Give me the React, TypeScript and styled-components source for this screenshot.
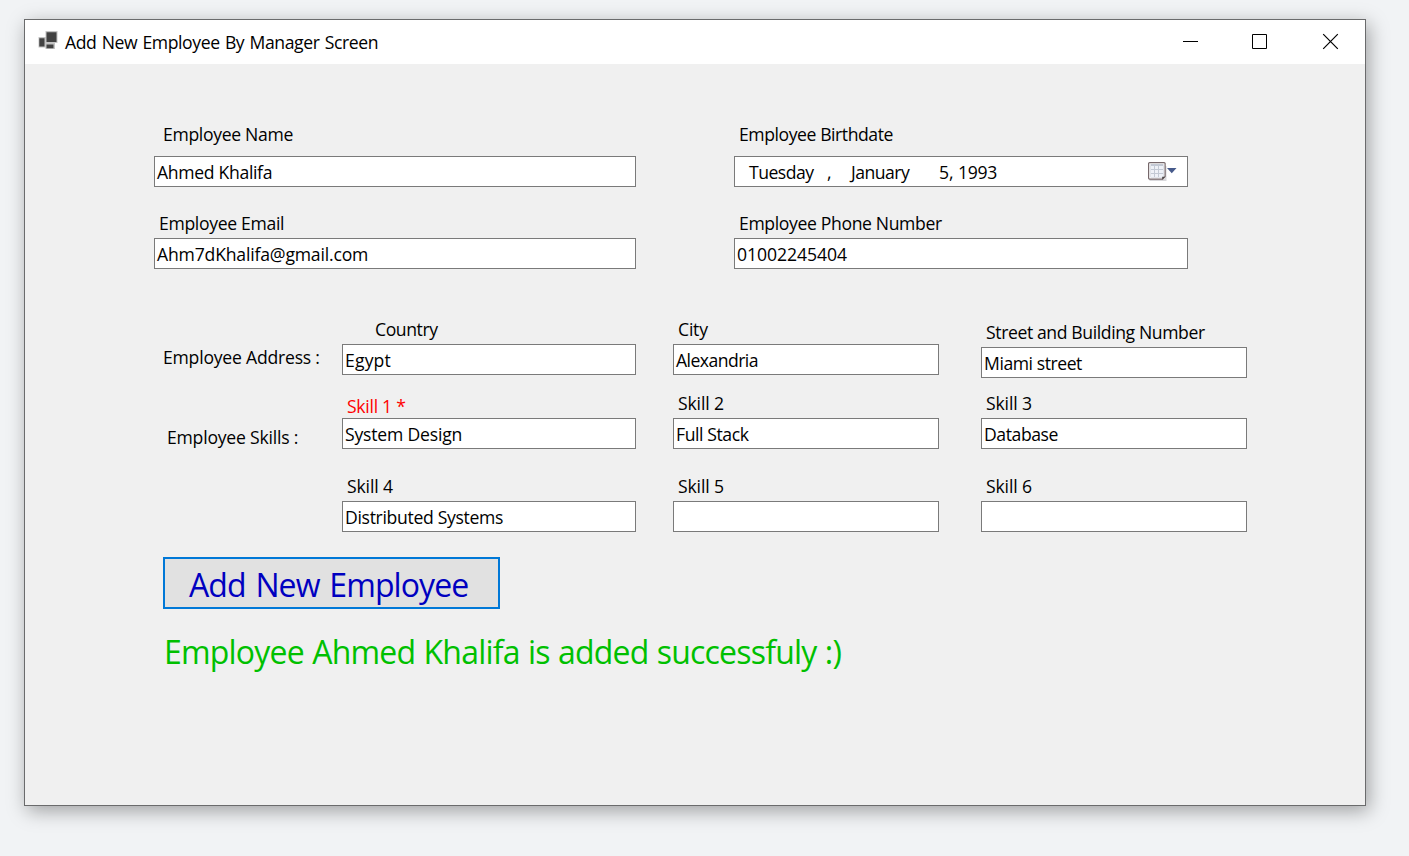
import React from "react";
import styled, { createGlobalStyle } from "styled-components";

const GlobalStyle = createGlobalStyle`
  *, *::before, *::after { box-sizing: border-box; }
  body {
    margin: 0;
    background: #f1f3f5;
    font-family: "Segoe UI", "Open Sans", "Noto Sans", sans-serif;
    font-size: 17.6px;
    line-height: 24px;
    color: #000;
  }
`;

const Desktop = styled.div`
  height: 856px;
  padding: 19px 43px 50px 24px;
  overflow: hidden;
`;

const Window = styled.main`
  display: flex;
  flex-direction: column;
  height: 787px;
  background: #f0f0f0;
  border: 1px solid #6a6b6c;
  box-shadow: 3px 5px 18px rgba(0, 0, 0, 0.34);
`;

const TitleBar = styled.header`
  display: flex;
  flex: none;
  height: 44px;
  padding-left: 13px;
  background: #fff;
`;

const AppIcon = styled.svg`
  width: 20px;
  height: 19px;
  margin: 11px 7px 0 0;
`;

const Title = styled.h1`
  flex: 1;
  margin: 10px 0 0;
  font: inherit;
  letter-spacing: -0.41px;
  word-spacing: 1.1px;
  white-space: nowrap;
`;

const WindowButtons = styled.div`
  display: flex;
`;

const WindowButton = styled.span<{ $width: number }>`
  display: flex;
  justify-content: center;
  width: ${(p) => p.$width}px;
  padding-top: 13px;

  svg {
    width: 17px;
    height: 17px;
    fill: none;
    stroke: #000;
  }
`;

const Form = styled.form`
  display: flex;
  flex-direction: column;
  padding: 58px 0 0 129px;
`;

const PairRow = styled.div`
  display: grid;
  grid-template-columns: 482px 454px;
  column-gap: 98px;
  margin-bottom: 24px;
`;

const GroupRow = styled.div<{ $before?: number }>`
  display: grid;
  grid-template-columns: 188px 294px 266px 266px;
  align-items: start;
  margin-top: ${(p) => p.$before ?? 0}px;

  & > :nth-child(3) { margin-left: 37px; width: 266px; }
  & > :nth-child(4) { margin-left: 79px; width: 266px; }
`;

const GroupTitle = styled.span<{ $top: number; $indent: number; $track: number }>`
  padding: ${(p) => p.$top}px 0 0 ${(p) => p.$indent}px;
  letter-spacing: ${(p) => p.$track}px;
  white-space: nowrap;
`;

const FieldBox = styled.div<{ $drop: number }>`
  display: flex;
  flex-direction: column;
  padding-top: ${(p) => p.$drop}px;
`;

const Label = styled.label<{ $indent: number; $gap: number; $track: number; $required?: boolean }>`
  padding-left: ${(p) => p.$indent}px;
  margin-bottom: ${(p) => p.$gap}px;
  letter-spacing: ${(p) => p.$track}px;
  color: ${(p) => (p.$required ? "#ff0000" : "#000")};
  white-space: nowrap;
`;

const TextBox = styled.div<{ $track?: number; $indent?: number }>`
  display: flex;
  height: 31px;
  padding: 3px 0 0 ${(p) => p.$indent ?? 2}px;
  background: #fff;
  border: 1px solid #7a7a7a;
  letter-spacing: ${(p) => p.$track ?? 0}px;
  white-space: nowrap;
`;

const DatePart = styled.span<{ $width: number; $track: number }>`
  flex: none;
  width: ${(p) => p.$width}px;
  letter-spacing: ${(p) => p.$track}px;
`;

const CalendarIcon = styled.svg`
  width: 30px;
  height: 21px;
  margin: 1px 10px 0 auto;
`;

const SubmitButton = styled.button`
  display: flex;
  width: 337px;
  height: 52px;
  margin-top: 25px;
  margin-left: 9px;
  padding: 4px 0 0 24px;
  background: #e1e1e1;
  border: 2px solid #0078d7;
  border-radius: 0;
  font: inherit;
  font-size: 32px;
  line-height: 44px;
  letter-spacing: -0.92px;
  word-spacing: 2.4px;
  text-align: left;
  white-space: nowrap;
  color: #0000c0;
`;

const Message = styled.p`
  margin: 20px 0 0 10px;
  font-size: 32px;
  line-height: 45px;
  letter-spacing: -0.8px;
  word-spacing: 0.8px;
  color: #00c000;
  white-space: nowrap;
`;

interface FieldProps {
  label: string;
  track: number;
  indent?: number;
  gap?: number;
  drop?: number;
  required?: boolean;
  value?: string;
  valueTrack?: number;
  children?: React.ReactNode;
}

function Field({ label, track, indent = 5, gap = 3, drop = 0, required, value, valueTrack, children }: FieldProps) {
  return (
    <FieldBox $drop={drop}>
      <Label $indent={indent} $gap={gap} $track={track} $required={required}>{label}</Label>
      {children ?? <TextBox $track={valueTrack}>{value}</TextBox>}
    </FieldBox>
  );
}

export default function App() {
  return (
    <>
      <GlobalStyle />
      <Desktop>
        <Window>
          <TitleBar>
            <AppIcon viewBox="0 0 20 19">
              <g fill="#c4c4c4">
                <path d="M.5 6h7v10.500h-7zM7.500 12h9.500v6h-9.500zM7.500 0h12v12h-12z" />
              </g>
              <g fill="#424242">
                <path d="M1.300 7.200h5.200v8.300h-5.200zM8.500 13.500h7v3.700h-7zM8.500 1.200h10v9.800h-10z" />
              </g>
            </AppIcon>
            <Title>Add New Employee By Manager Screen</Title>
            <WindowButtons>
              <WindowButton $width={65}>
                <svg viewBox="0 0 17 17"><path d="M1 8.500h15" /></svg>
              </WindowButton>
              <WindowButton $width={73}>
                <svg viewBox="0 0 17 17"><path d="M1.500 1.500h14v14h-14z" /></svg>
              </WindowButton>
              <WindowButton $width={69}>
                <svg viewBox="0 0 17 17"><path d="M1.200 1.200l14.600 14.600M15.800 1.200L1.200 15.800" strokeWidth="1.200" /></svg>
              </WindowButton>
            </WindowButtons>
          </TitleBar>
          <Form>
            <PairRow>
              <Field label="Employee Name" track={-0.32} indent={9} gap={10} value="Ahmed Khalifa" valueTrack={-0.32} />
              <Field label="Employee Birthdate" track={-0.43} gap={10}>
                <TextBox $indent={14}>
                  <DatePart $width={78} $track={-0.52}>Tuesday</DatePart>
                  <DatePart $width={24} $track={0}>,</DatePart>
                  <DatePart $width={88} $track={-0.5}>January</DatePart>
                  <DatePart $width={19} $track={-0.1}>5,</DatePart>
                  <DatePart $width={44} $track={-0.3}>1993</DatePart>
                  <CalendarIcon viewBox="0 0 30 21">
                    <path d="M2.500 19h16v-14" fill="none" stroke="#d9d9dc" strokeWidth="2" />
                    <path d="M2.600 1.600h14.500a1 1 0 0 1 1 1v13l-2.500 2.500h-13a1 1 0 0 1-1-1v-14.500a1 1 0 0 1 1-1z" fill="#fff" stroke="#75676a" strokeWidth="1.200" />
                    <path d="M3.500 3h13v13.500h-13z" fill="#c3c9d4" />
                    <path d="M4 5h3v3h-3zM8 5h3v3h-3zM12 5h4v3h-4zM4 9h3v3h-3zM8 9h3v3h-3zM12 9h4v3h-4zM4 13h3v3h-3zM8 13h3v3h-3zM12 13h4v3h-4z" fill="#eef1f7" />
                    <path d="M15.200 18.500v-2.800h3z" fill="#4b4444" />
                    <path d="M20 7h9.500l-4.750 5.200z" fill="#465a8b" />
                  </CalendarIcon>
                </TextBox>
              </Field>
            </PairRow>
            <PairRow>
              <Field label="Employee Email" track={-0.33} value="Ahm7dKhalifa@gmail.com" valueTrack={-0.18} />
              <Field label="Employee Phone Number" track={-0.36} value="01002245404" valueTrack={-0.07} />
            </PairRow>
            <GroupRow $before={24}>
              <GroupTitle $top={28} $indent={9} $track={-0.22}>Employee Address :</GroupTitle>
              <Field label="Country" track={-0.42} indent={33} value="Egypt" valueTrack={0.15} />
              <Field label="City" track={-0.2} value="Alexandria" valueTrack={-0.55} />
              <Field label="Street and Building Number" track={-0.39} drop={3} value="Miami street" valueTrack={-0.44} />
            </GroupRow>
            <GroupRow $before={13}>
              <GroupTitle $top={34} $indent={13} $track={-0.22}>Employee Skills :</GroupTitle>
              <Field label="Skill 1 *" track={-0.28} drop={3} gap={0} required value="System Design" valueTrack={-0.2} />
              <Field label="Skill 2" track={-0.15} value="Full Stack" valueTrack={-0.42} />
              <Field label="Skill 3" track={-0.15} value="Database" valueTrack={-0.42} />
            </GroupRow>
            <GroupRow $before={25}>
              <span />
              <Field label="Skill 4" track={-0.15} value="Distributed Systems" valueTrack={-0.32} />
              <Field label="Skill 5" track={-0.15} />
              <Field label="Skill 6" track={-0.15} />
            </GroupRow>
            <SubmitButton type="button">Add New Employee</SubmitButton>
            <Message>Employee Ahmed Khalifa is added successfuly :)</Message>
          </Form>
        </Window>
      </Desktop>
    </>
  );
}
